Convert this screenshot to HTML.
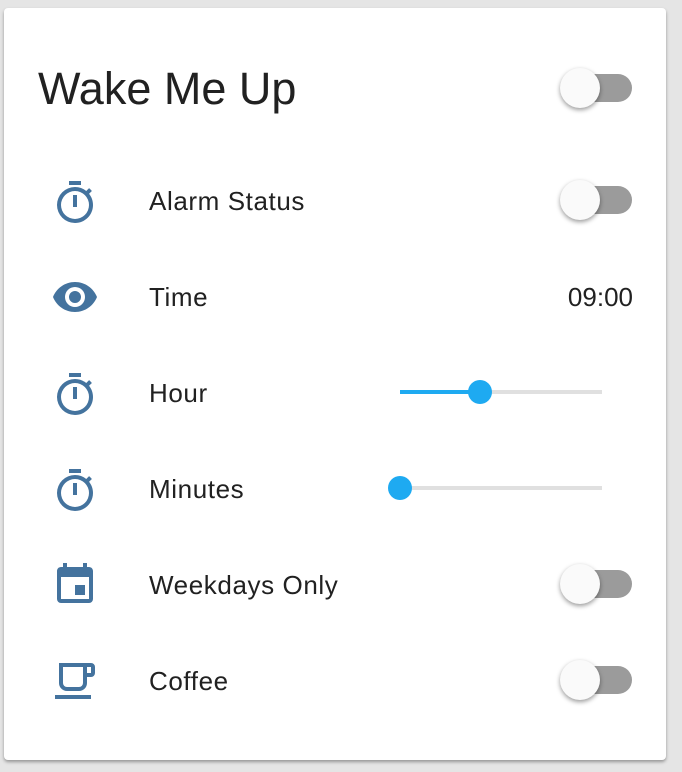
<!DOCTYPE html>
<html><head><style>
body{margin:0;width:682px;height:772px;background:#e5e5e5;font-family:"Liberation Sans",sans-serif;position:relative;overflow:hidden}
.card{position:absolute;left:4px;top:8px;width:662px;height:752px;background:#fff;border-radius:4px;box-shadow:0 2px 3px rgba(0,0,0,.35)}
.title{position:absolute;left:38px;top:61px;font-size:45px;color:#212121;line-height:56px}
.lbl{position:absolute;left:149px;font-size:26px;color:#212121;line-height:30px;letter-spacing:0.6px}
.ic{position:absolute;left:51px;width:48px;height:48px;fill:#44739e}
.tg{position:absolute;left:560px;width:72px;height:28px}
.tg .tr{position:absolute;left:10px;top:0;width:62px;height:28px;border-radius:14px;background:#9b9b9b}
.tg .th{position:absolute;left:0;top:-6px;width:40px;height:40px;border-radius:50%;background:#fafafa;box-shadow:0 2px 5px rgba(0,0,0,.4)}
.trk{position:absolute;left:400px;width:202px;height:4px;background:#e0e0e0}
.fill{position:absolute;height:4px;background:#1eaaf1;left:400px}
.knob{position:absolute;width:24px;height:24px;border-radius:50%;background:#1eaaf1}
</style></head><body>
<div class="card"></div>
<div class="title">Wake Me Up</div>
<div class="tg" style="top:74px"><div class="tr"></div><div class="th"></div></div>

<svg class="ic" style="top:179px" viewBox="0 0 24 24"><path d="M12,20A7,7 0 0,1 5,13A7,7 0 0,1 12,6A7,7 0 0,1 19,13A7,7 0 0,1 12,20M19.03,7.39L20.45,5.97C20,5.46 19.55,5 19.04,4.56L17.62,6C16.07,4.74 14.12,4 12,4A9,9 0 0,0 3,13A9,9 0 0,0 12,22C17,22 21,17.97 21,13C21,10.88 20.26,8.93 19.03,7.39M11,14H13V8H11M15,1H9V3H15V1Z"/></svg>
<div class="lbl" style="top:186px">Alarm Status</div>
<div class="tg" style="top:186px"><div class="tr"></div><div class="th"></div></div>

<svg class="ic" style="top:273px" viewBox="0 0 24 24"><path d="M12,9A3,3 0 0,0 9,12A3,3 0 0,0 12,15A3,3 0 0,0 15,12A3,3 0 0,0 12,9M12,17A5,5 0 0,1 7,12A5,5 0 0,1 12,7A5,5 0 0,1 17,12A5,5 0 0,1 12,17M12,4.5C7,4.5 2.73,7.61 1,12C2.73,16.39 7,19.5 12,19.5C17,19.5 21.27,16.39 23,12C21.27,7.61 17,4.5 12,4.5Z"/></svg>
<div class="lbl" style="top:282px">Time</div>
<div class="lbl" style="top:282px;left:auto;right:49px;letter-spacing:0">09:00</div>

<svg class="ic" style="top:371px" viewBox="0 0 24 24"><path d="M12,20A7,7 0 0,1 5,13A7,7 0 0,1 12,6A7,7 0 0,1 19,13A7,7 0 0,1 12,20M19.03,7.39L20.45,5.97C20,5.46 19.55,5 19.04,4.56L17.62,6C16.07,4.74 14.12,4 12,4A9,9 0 0,0 3,13A9,9 0 0,0 12,22C17,22 21,17.97 21,13C21,10.88 20.26,8.93 19.03,7.39M11,14H13V8H11M15,1H9V3H15V1Z"/></svg>
<div class="lbl" style="top:378px">Hour</div>
<div class="trk" style="top:390px"></div><div class="fill" style="top:390px;width:80px"></div><div class="knob" style="left:468px;top:380px"></div>

<svg class="ic" style="top:467px" viewBox="0 0 24 24"><path d="M12,20A7,7 0 0,1 5,13A7,7 0 0,1 12,6A7,7 0 0,1 19,13A7,7 0 0,1 12,20M19.03,7.39L20.45,5.97C20,5.46 19.55,5 19.04,4.56L17.62,6C16.07,4.74 14.12,4 12,4A9,9 0 0,0 3,13A9,9 0 0,0 12,22C17,22 21,17.97 21,13C21,10.88 20.26,8.93 19.03,7.39M11,14H13V8H11M15,1H9V3H15V1Z"/></svg>
<div class="lbl" style="top:474px">Minutes</div>
<div class="trk" style="top:486px"></div><div class="knob" style="left:388px;top:476px"></div>

<svg class="ic" style="top:561px" viewBox="0 0 24 24"><path d="M19,19H5V8H19M16,1V3H8V1H6V3H5C3.89,3 3,3.89 3,5V19A2,2 0 0,0 5,21H19A2,2 0 0,0 21,19V5C21,3.89 20.1,3 19,3H18V1M17,12H12V17H17V12Z"/><rect x="4" y="4" width="16" height="4"/></svg>
<div class="lbl" style="top:570px">Weekdays Only</div>
<div class="tg" style="top:570px"><div class="tr"></div><div class="th"></div></div>

<svg class="ic" style="top:657px" viewBox="0 0 24 24"><path d="M2,21V19H20V21H2M20,8V5H18V8H20M20,3A2,2 0 0,1 22,5V8A2,2 0 0,1 20,10H18V13A4,4 0 0,1 14,17H8A4,4 0 0,1 4,13V3H20M16,5H6V13A2,2 0 0,0 8,15H14A2,2 0 0,0 16,13V5Z"/></svg>
<div class="lbl" style="top:666px">Coffee</div>
<div class="tg" style="top:666px"><div class="tr"></div><div class="th"></div></div>
</body></html>
